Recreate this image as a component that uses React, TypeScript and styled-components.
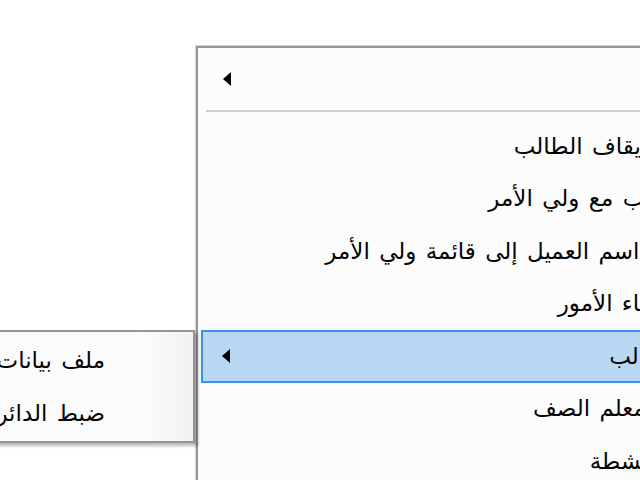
import * as React from 'react'
import styled, { createGlobalStyle } from 'styled-components'

const GlobalStyle = createGlobalStyle`
    html, body {
        margin: 0;
        padding: 0;
        background: #ffffff;
        overflow: hidden;
    }
    body {
        font-family: "DejaVu Sans", "Noto Sans", sans-serif;
    }
`

const Desktop = styled.div`
    position: relative;
    width: 640px;
    height: 480px;
    overflow: hidden;
    background: #ffffff;
`

// main popup, wider than the window so the right side is cut off
const Menu = styled.div`
    position: absolute;
    left: 196px;
    top: 46px;
    width: 532px;
    height: 460px;
    background: #fcfcfc;
    border: 2px solid #979797;
    box-shadow: 0 0 0 1px #d6d6d6;
    display: flex;
    flex-direction: column;
    direction: rtl;
`

const HeaderRow = styled.div`
    height: 62px;
    flex: none;
    display: flex;
    align-items: center;
    direction: ltr;
    padding-left: 25px;
`

const Separator = styled.div`
    height: 2px;
    flex: none;
    margin: 0 0 0 8px;
    background: #cfcfcf;
`

const ItemList = styled.div`
    display: flex;
    flex-direction: column;
    padding: 8px 3px 0 3px;
`

const Item = styled.div<{ $active?: boolean }>`
    height: 52.5px;
    flex: none;
    box-sizing: border-box;
    display: flex;
    align-items: center;
    justify-content: space-between;
    padding: 0 20px 0 19px;
    font-size: 23px;
    word-spacing: 2px;
    color: #050505;
    white-space: nowrap;
    background: ${p => p.$active ? '#b9d7f3' : 'transparent'};
    border: 2px solid ${p => p.$active ? '#3a92e6' : 'transparent'};
`

const Label = styled.span`
    line-height: 1;
`

const Arrow = styled.span`
    width: 0;
    height: 0;
    border-top: 7px solid transparent;
    border-bottom: 7px solid transparent;
    border-right: 8px solid #000000;
`

// cascaded submenu, opened to the left of the active item
const SubMenu = styled.div`
    position: absolute;
    right: 445px;
    top: 330px;
    width: 300px;
    height: 109px;
    background: #fbfbfb;
    border: 2px solid #939393;
    box-shadow: 3px 3px 3px rgba(0, 0, 0, 0.28);
    display: flex;
    direction: rtl;
`

const Gutter = styled.div`
    width: 58px;
    flex: none;
    background: linear-gradient(to right, #fdfdfd, #f2f2f2);
`

const SubList = styled.div`
    flex: 1;
    display: flex;
    flex-direction: column;
    padding-top: 1px;
`

const SubItem = styled.div`
    height: 53px;
    display: flex;
    align-items: center;
    padding-right: 30px;
    font-size: 23px;
    word-spacing: 2px;
    color: #050505;
    white-space: nowrap;
`

const items = [
    { label: 'طلب إيقاف الطالب' },
    { label: 'الطــالب مع ولي الأمر' },
    { label: 'إضافة اسم العميل إلى قائمة ولي الأمر' },
    { label: 'مع أولياء الأمور' },
    { label: 'الطــــالب', active: true, sub: true },
    { label: 'لقــاء معلم الصف' },
    { label: 'كل الأنشطة' },
]

export default function App() {
    return (
        <Desktop>
            <GlobalStyle />
            <Menu>
                <HeaderRow>
                    <Arrow />
                </HeaderRow>
                <Separator />
                <ItemList>
                    {items.map(it => (
                        <Item key={it.label} $active={it.active}>
                            <Label>{it.label}</Label>
                            {it.sub && <Arrow />}
                        </Item>
                    ))}
                </ItemList>
            </Menu>
            <SubMenu>
                <Gutter />
                <SubList>
                    <SubItem>ملف بيانات الطالب</SubItem>
                    <SubItem>ضبط الدائرة</SubItem>
                </SubList>
            </SubMenu>
        </Desktop>
    )
}
